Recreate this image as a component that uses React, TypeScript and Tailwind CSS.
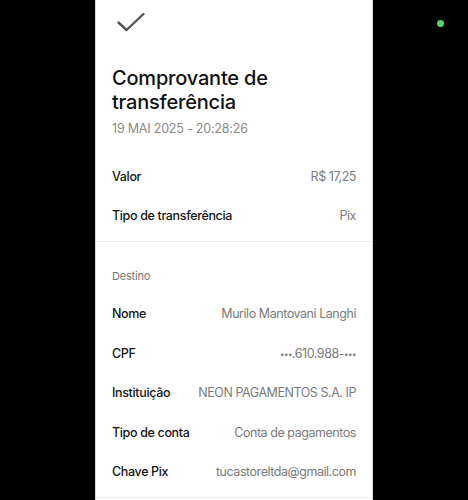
import React from 'react';

const Dots = () => <span className="text-[8px] tracking-[-0.5px] align-[1px]">•••</span>;

const rows1: { label: string; value: React.ReactNode }[] = [
  { label: 'Valor', value: 'R$ 17,25' },
  { label: 'Tipo de transferência', value: 'Pix' },
];

const rows2: { label: string; value: React.ReactNode }[] = [
  { label: 'Nome', value: 'Murilo Mantovani Langhi' },
  { label: 'CPF', value: <><Dots />.610.988-<Dots /></> },
  { label: 'Instituição', value: 'NEON PAGAMENTOS S.A. IP' },
  { label: 'Tipo de conta', value: 'Conta de pagamentos' },
  { label: 'Chave Pix', value: 'tucastoreltda@gmail.com' },
];

const Row: React.FC<{ label: string; value: React.ReactNode }> = ({ label, value }) => (
  <div className="h-[39.4px] flex items-center justify-between">
    <span className="text-[12.5px] font-medium text-[#151515] tracking-[-0.35px]">{label}</span>
    <span className="text-[12.5px] text-[#7a7a7a] tracking-[-0.45px]">{value}</span>
  </div>
);

export default function App() {
  return (
    <div className="w-[468px] h-[500px] bg-black relative overflow-hidden" style={{ fontFamily: 'Inter, "Noto Sans", sans-serif' }}>
      <div className="absolute top-[20px] left-[437px] w-[7px] h-[7px] rounded-full bg-[#5fd36b]" />
      <div className="ml-[95px] w-[278px] h-full bg-white border-l border-r border-[#d8d8d8]">
        <div className="px-[16px]">
          <div className="pt-[11px] h-[40px]">
            <svg width="30" height="22" viewBox="0 0 30 22" className="ml-[5px]">
              <path d="M1.5 11.5 L9.5 19 L26.5 3" fill="none" stroke="#555" strokeWidth="2.4" strokeLinecap="round" strokeLinejoin="round" />
            </svg>
          </div>
          <h1 className="mt-[26px] text-[20px] leading-[24px] font-medium text-[#111] tracking-[-0.2px]">
            Comprovante de<br />transferência
          </h1>
          <p className="mt-[6px] text-[12.5px] text-[#8a8a8a] tracking-[-0.2px]">19 MAI 2025 - 20:28:26</p>
          <div className="mt-[19px]">
            {rows1.map(r => <Row key={r.label} {...r} />)}
          </div>
        </div>
        <div className="mt-[4px] border-t border-[#ececec]" />
        <div className="px-[16px]">
          <p className="mt-[26px] text-[11px] text-[#777] tracking-[-0.2px]">Destino</p>
          <div className="mt-[11px]">
            {rows2.map(r => <Row key={r.label} {...r} />)}
          </div>
        </div>
        <div className="mt-[5px] border-t border-[#ececec]" />
      </div>
    </div>
  );
}
